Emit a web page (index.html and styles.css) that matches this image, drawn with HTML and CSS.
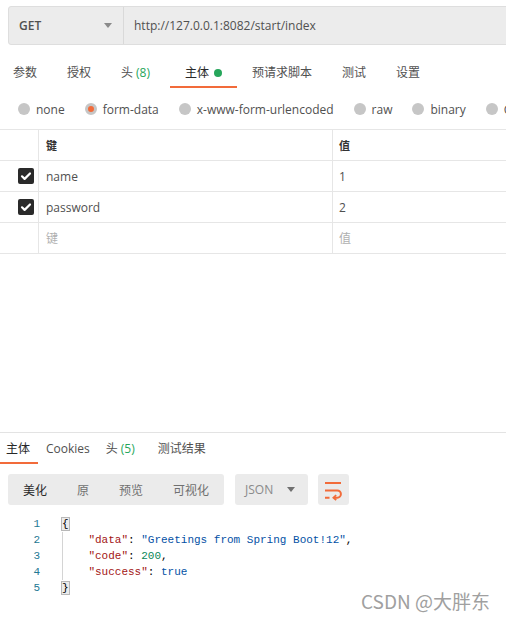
FILE: index.html
```html
<!DOCTYPE html>
<html lang="zh">
<head>
<meta charset="utf-8">
<title>Request</title>
<link rel="stylesheet" href="styles.css">
</head>
<body>
<div class="app">
  <section class="request">
    <div class="urlbar">
      <div class="method"><span>GET</span><span class="caret"></span></div>
      <div class="url">http://127.0.0.1:8082/start/index</div>
    </div>
    <nav class="tabs">
      <div class="tab first">参数</div>
      <div class="tab">授权</div>
      <div class="tab hdr">头 <span class="green">(8)</span></div>
      <div class="tab active">主体 <span class="dot"></span></div>
      <div class="tab">预请求脚本</div>
      <div class="tab">测试</div>
      <div class="tab">设置</div>
    </nav>
    <div class="radios">
      <div class="radio"><span class="circle"></span>none</div>
      <div class="radio"><span class="circle on"></span>form-data</div>
      <div class="radio"><span class="circle"></span>x-www-form-urlencoded</div>
      <div class="radio"><span class="circle"></span>raw</div>
      <div class="radio"><span class="circle"></span>binary</div>
      <div class="radio"><span class="circle"></span>GraphQL</div>
    </div>
    <div class="kv">
      <div class="row head"><div class="c0"></div><div class="c1">键</div><div class="c2">值</div></div>
      <div class="row"><div class="c0"><span class="check"><svg viewBox="0 0 16 16" width="16" height="16"><path d="M4 8.3l2.6 2.6L12 5.5" fill="none" stroke="#fff" stroke-width="2.2" stroke-linecap="round" stroke-linejoin="round"/></svg></span></div><div class="c1">name</div><div class="c2">1</div></div>
      <div class="row"><div class="c0"><span class="check"><svg viewBox="0 0 16 16" width="16" height="16"><path d="M4 8.3l2.6 2.6L12 5.5" fill="none" stroke="#fff" stroke-width="2.2" stroke-linecap="round" stroke-linejoin="round"/></svg></span></div><div class="c1">password</div><div class="c2">2</div></div>
      <div class="row ph"><div class="c0"></div><div class="c1">键</div><div class="c2">值</div></div>
    </div>
  </section>
  <section class="response">
    <nav class="rtabs">
      <div class="rtab active first">主体</div>
      <div class="rtab">Cookies</div>
      <div class="rtab">头 <span class="green">(5)</span></div>
      <div class="rtab">测试结果</div>
    </nav>
    <div class="toolbar">
      <div class="group">
        <div class="btn sel">美化</div>
        <div class="btn">原</div>
        <div class="btn">预览</div>
        <div class="btn">可视化</div>
      </div>
      <div class="select">JSON<span class="caret dark"></span></div>
      <div class="wrap">
        <svg viewBox="0 0 17 18" width="17" height="18"><path d="M0 2H16M0 9.5H12.3a3.6 3.6 0 0 1 0 7.2H9M0 16.7H4.5" fill="none" stroke="#f26b3a" stroke-width="2"/><path d="M11.2 14.2L8.4 16.7L11.2 19.2" fill="none" stroke="#f26b3a" stroke-width="1.8"/></svg>
      </div>
    </div>
    <div class="code">
      <div class="gutter"><div>1</div><div>2</div><div>3</div><div>4</div><div>5</div></div>
      <div class="lines">
        <div class="ln"><span class="br">{</span></div>
        <div class="indent">
          <div class="ln"><span class="k">"data"</span>: <span class="s">"Greetings from Spring Boot!12"</span>,</div>
          <div class="ln"><span class="k">"code"</span>: <span class="n">200</span>,</div>
          <div class="ln"><span class="k">"success"</span>: <span class="s">true</span></div>
        </div>
        <div class="ln"><span class="br">}</span></div>
      </div>
    </div>
    <div class="watermark">CSDN @大胖东</div>
  </section>
</div>
</body>
</html>
```

FILE: styles.css
```css
* { box-sizing: border-box; }
html, body { margin: 0; padding: 0; background: #fff; }
body {
  font-family: "Open Sans", "Noto Sans CJK SC", sans-serif;
  font-size: 12px;
  color: #505050;
  overflow: hidden;
}
.app { width: 506px; height: 620px; overflow: hidden; position: relative; }

.request { height: 432px; padding-top: 6px; }

.urlbar {
  margin: 0 -20px 0 8px;
  height: 39px;
  display: flex;
  background: #ececec;
  border: 1px solid #dedede;
  border-radius: 3px;
}
.method {
  width: 115px;
  display: flex;
  align-items: center;
  justify-content: space-between;
  padding: 0 11px 0 10px;
  border-right: 1px solid #d9d9d9;
  font-weight: 600;
  color: #505050;
  font-size: 12px;
}
.caret {
  width: 0; height: 0;
  border-left: 4px solid transparent;
  border-right: 4px solid transparent;
  border-top: 5px solid #8a8a8a;
}
.caret.dark { border-top-color: #707070; }
.url { display: flex; align-items: center; padding-left: 10px; color: #505050; }

.tabs { display: flex; margin-left: -2px; }
.tab {
  height: 43px;
  padding: 0 15px 4px;
  display: flex;
  align-items: flex-end;
  line-height: 18px;
  border-bottom: 2px solid transparent;
  color: #505050;
  white-space: nowrap;
}
.tab.hdr { margin-right: 5px; }
.tab.active { border-bottom-color: #f26b3a; color: #282828; }
.green { color: #26a65b; margin-left: 3px; }
.dot {
  display: inline-block;
  width: 8px; height: 8px;
  border-radius: 50%;
  background: #26a65b;
  margin: 0 0 5px 5px;
}

.radios {
  height: 41px;
  display: flex;
  align-items: center;
  padding: 1px 0 0 18px;
  gap: 20px;
  white-space: nowrap;
}
.radio { display: flex; align-items: center; gap: 6px; color: #505050; }
.circle {
  width: 12px; height: 12px;
  border-radius: 50%;
  background: #c6c6c6;
  flex: none;
}
.circle.on { background: #f26b3a; border: 3px solid #c6c6c6; }

.kv { border-top: 1px solid #e6e6e6; }
.row {
  display: grid;
  grid-template-columns: 39px 294px 1fr;
  height: 31px;
  border-bottom: 1px solid #e6e6e6;
}
.row > div { display: flex; align-items: center; }
.c0 { border-right: 1px solid #e6e6e6; justify-content: flex-end; padding-right: 4px; }
.c1 { border-right: 1px solid #e6e6e6; padding-left: 7px; }
.c2 { padding-left: 6px; }
.head .c1, .head .c2 { font-size: 11px; font-weight: 700; color: #333; }
.ph .c1, .ph .c2 { color: #b0b0b0; }
.check {
  width: 16px; height: 16px;
  border-radius: 2px;
  background: #2a2a2a;
  display: block;
}
.check svg { display: block; }

.response { border-top: 1px solid #e3e3e3; height: 188px; position: relative; }
.rtabs { display: flex; }
.rtab {
  height: 31px;
  padding: 0 8px 4px;
  display: flex;
  align-items: flex-end;
  line-height: 18px;
  border-bottom: 2px solid transparent;
  color: #505050;
}
.rtab.first { padding-left: 6px; }
.rtab.active { border-bottom-color: #f26b3a; color: #282828; }
.rtab:last-child { margin-left: 7px; }

.toolbar { display: flex; margin: 10px 0 0 8px; height: 31px; }
.group { display: flex; background: #ebebeb; border-radius: 3px; }
.btn { padding: 0 15px; display: flex; align-items: center; color: #707070; }
.btn.sel { color: #282828; }
.select {
  margin-left: 11px;
  width: 73px;
  background: #ebebeb;
  border-radius: 3px;
  display: flex;
  align-items: center;
  justify-content: space-between;
  padding: 0 13px 0 10px;
  color: #8a8a8a;
}
.wrap {
  margin-left: 10px;
  width: 31px;
  background: #ebebeb;
  border-radius: 3px;
  display: flex;
  align-items: center;
  justify-content: center;
}
.wrap svg { display: block; overflow: visible; margin-top: 1px; }

.code {
  display: flex;
  margin-top: 11px;
  font-family: "Liberation Mono", "DejaVu Sans Mono", monospace;
  font-size: 11px;
  line-height: 16px;
  color: #000;
}
.gutter { width: 40px; text-align: right; color: #237893; }
.lines { margin-left: 22px; }
.ln { white-space: pre; height: 16px; }
.indent { border-left: 1px solid #d4d4d4; padding-left: calc(4ch - 1px); }
.br { outline: 1px solid #b8b8b8; background: #ececec; }
.k { color: #a31515; }
.s { color: #0451a5; }
.n { color: #098658; }

.watermark {
  position: absolute;
  right: 16px;
  bottom: 6px;
  font-size: 19px;
  color: #a0a0a0;
  text-shadow: 1px 1px 1px #fff;
  font-family: "Noto Sans CJK SC", "Open Sans", sans-serif;
}
```
